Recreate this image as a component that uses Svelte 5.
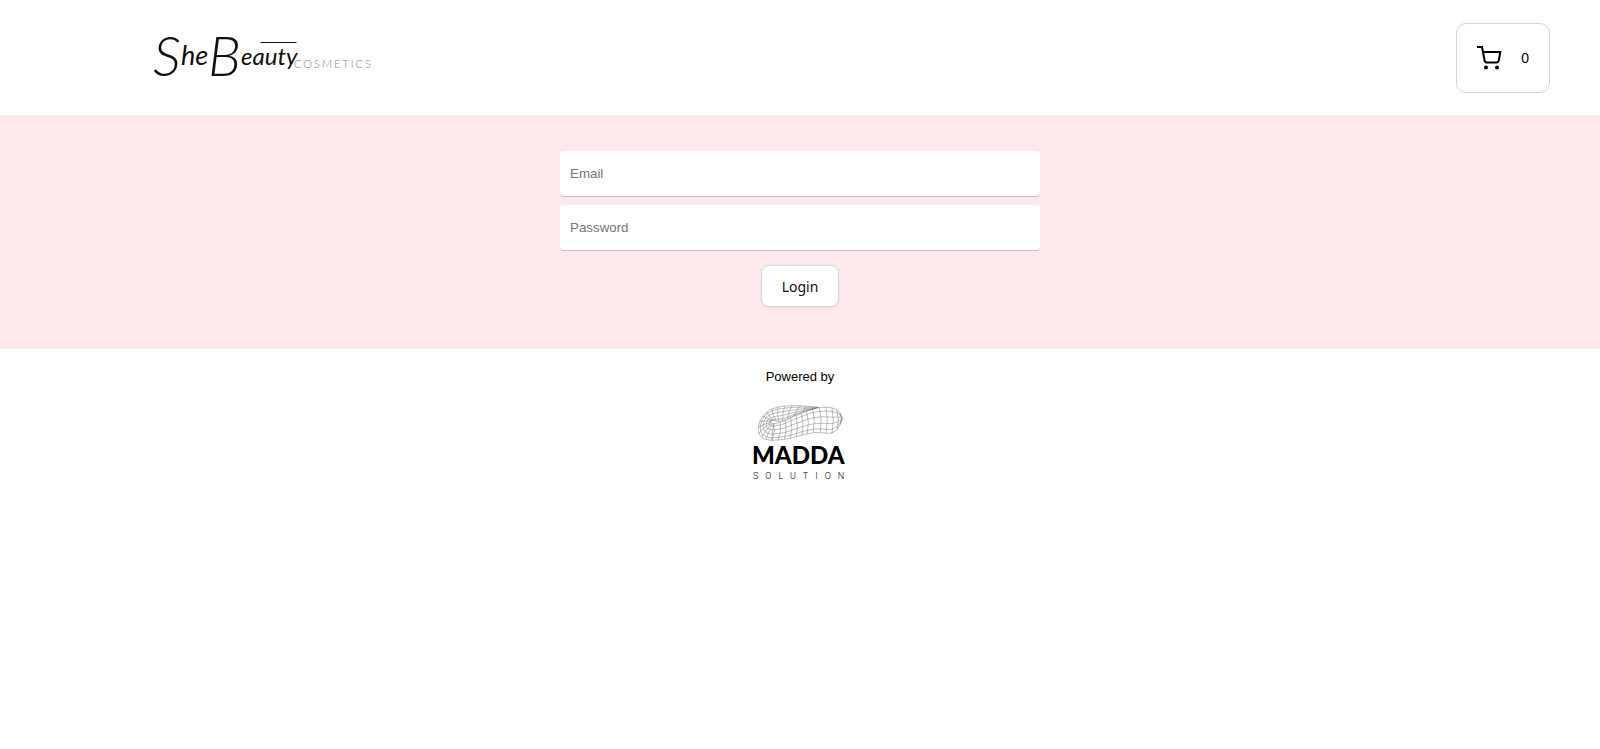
<script>
  let email = $state('');
  let password = $state('');
  let cartCount = $state(0);

  // Wireframe of the twisted ring: ribs run across the tube, rails along it.
  const front = [
    [60, 127], [78, 126], [97, 124], [115, 121], [133, 116], [150, 111], [166, 107],
    [184, 104], [205, 103], [222, 106], [240, 106], [256, 95], [265, 80], [270, 64]
  ];
  const frontTop = [
    [66, 77], [85, 74], [100, 68], [116, 60], [132, 52], [148, 46], [164, 39],
    [182, 33], [202, 29], [222, 27], [240, 29], [254, 35], [264, 44], [270, 58]
  ];
  const loop = [
    [60, 127], [42, 125], [29, 119], [20, 106], [19, 88], [23, 70], [32, 54], [44, 42],
    [60, 33], [78, 27], [98, 24], [120, 23], [145, 23], [165, 25], [200, 28]
  ];
  const loopInner = [
    [66, 77], [62, 77], [59, 76], [57, 74], [57, 71], [58, 68], [61, 67], [66, 68],
    [72, 69], [80, 70], [92, 68], [106, 62], [126, 53], [152, 42], [190, 31]
  ];
  const lerp = (a, b, t) => a + (b - a) * t;
  const smooth = (pts) => {
    let d = `M${pts[0][0]} ${pts[0][1]}`;
    for (let i = 1; i < pts.length - 1; i++) {
      const [x, y] = pts[i];
      const [u, v] = pts[i + 1];
      d += `Q${x} ${y} ${(x + u) / 2} ${(y + v) / 2}`;
    }
    const last = pts[pts.length - 1];
    return `${d}L${last[0]} ${last[1]}`;
  };
  const rails = (a, b, n) =>
    Array.from({ length: n + 1 }, (_, i) => {
      const t = (1 - Math.cos((Math.PI * i) / n)) / 4 + i / n / 2;
      return smooth(a.map((p, k) => [lerp(p[0], b[k][0], t), lerp(p[1], b[k][1], t)]));
    });
  const ribs = (a, b, bow) =>
    a.map((p, k) => {
      const q = b[k];
      return `M${p[0]} ${p[1]}Q${(p[0] + q[0]) / 2 + bow} ${(p[1] + q[1]) / 2} ${q[0]} ${q[1]}`;
    });
  const mesh = [
    ...rails(front, frontTop, 5),
    ...rails(loop, loopInner, 5),
    ...ribs(front, frontTop, 8),
    ...ribs(loop, loopInner, -4)
  ].join('');
</script>

<header>
  <a class="brand" href="/" aria-label="SheBeauty Cosmetics">
    <svg width="222" height="70" viewBox="0 0 222 70">
      <text class="script" x="1" y="53"><tspan font-size="56">S</tspan><tspan class="small" font-size="27" dy="-11">he</tspan><tspan font-size="56" dy="11">B</tspan><tspan class="small" font-size="24" dy="-11">eauty</tspan></text>
      <path d="M109 19.500H144" fill="none" stroke="#111" stroke-width="1" stroke-linecap="round" />
      <text class="sub" x="142" y="45">COSMETICS</text>
    </svg>
  </a>
  <button class="cart" type="button" aria-label="Cart">
    <svg width="24" height="24" viewBox="0 0 24 24" fill="none" stroke="#000" stroke-width="2">
      <path d="M0 1H5L7.600 14.500Q8 16.500 10 16.500H19.500Q21.300 16.500 21.700 14.700L23.300 6H6" />
      <circle cx="9" cy="21.500" r="2" fill="#000" stroke="none" />
      <circle cx="20" cy="21.500" r="2" fill="#000" stroke="none" />
    </svg>
    <span>{cartCount}</span>
  </button>
</header>

<main>
  <form onsubmit={(e) => e.preventDefault()}>
    <input type="email" placeholder="Email" aria-label="Email" bind:value={email} />
    <input type="password" placeholder="Password" aria-label="Password" bind:value={password} />
    <button class="login" type="submit">Login</button>
  </form>
</main>

<footer>
  <p>Powered by</p>
  <a href="/" aria-label="Madda Solution">
    <svg width="96" height="84" viewBox="0 0 96 84">
      <g transform="translate(0 -3) scale(.3333)">
        <path d={mesh} fill="none" stroke="#666" stroke-width="1.300" />
      </g>
      <text class="madda" x="0" y="63">MADDA</text>
      <text class="solution" x="1" y="78">SOLUTION</text>
    </svg>
  </a>
</footer>

<style>
  :global(body) {
    margin: 0;
    background: #fff;
    color: #000;
    font-family: 'Liberation Sans', Arial, sans-serif;
    font-size: 13px;
  }
  header {
    display: flex;
    align-items: center;
    justify-content: space-between;
    padding: 23px 50px 22px 152px;
  }
  .brand,
  footer a {
    display: block;
    color: #111;
  }
  svg {
    display: block;
    overflow: visible;
  }
  .script {
    font-family: 'Lato', sans-serif;
    font-style: italic;
    font-weight: 300;
    fill: #111;
  }
  .small {
    font-weight: 400;
  }
  .sub {
    font-family: 'Lato', sans-serif;
    font-size: 11px;
    font-weight: 300;
    letter-spacing: 2px;
    fill: #888;
  }
  .cart {
    display: flex;
    align-items: center;
    gap: 20px;
    height: 70px;
    padding: 0 20px;
    border: 1px solid #d1d5db;
    border-radius: 10px;
    background: #fff;
    color: #000;
    font: 14px 'Liberation Sans', Arial, sans-serif;
    cursor: pointer;
  }
  main {
    padding: 36px 16px 42px;
    background: #fde8eb;
  }
  form {
    display: flex;
    flex-direction: column;
    align-items: center;
    gap: 8px;
    max-width: 480px;
    margin: 0 auto;
  }
  input {
    box-sizing: border-box;
    width: 100%;
    height: 46px;
    padding: 0 10px;
    border: 0;
    border-bottom: 1px solid #d0b8c0;
    border-radius: 4px;
    background: #fff;
    font-family: 'Liberation Sans', Arial, sans-serif;
  }
  input::placeholder {
    color: #757575;
  }
  .login {
    height: 42px;
    margin-top: 6px;
    padding: 0 20px;
    border: 1px solid #d5d9d9;
    border-radius: 8px;
    background: #fff;
    box-shadow: 0 1px 2px rgba(213, 217, 217, 0.5);
    color: #0f1111;
    font: 400 14px 'Noto Sans', sans-serif;
    cursor: pointer;
  }
  footer {
    display: flex;
    flex-direction: column;
    align-items: center;
    gap: 16px;
    padding: 20px 16px;
  }
  p {
    margin: 0;
    line-height: 16px;
  }
  .madda {
    font-family: 'Lato', sans-serif;
    font-size: 24px;
    font-weight: 900;
    fill: #000;
  }
  .solution {
    font-family: Roboto, sans-serif;
    font-size: 9px;
    font-weight: 300;
    letter-spacing: 7px;
    fill: #000;
  }
</style>
